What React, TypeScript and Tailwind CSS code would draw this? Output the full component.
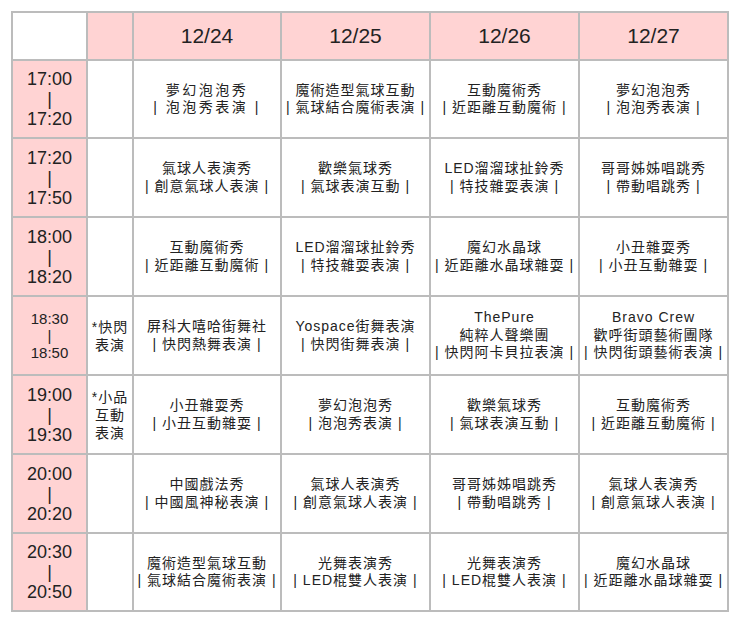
import React from "react";

type Row = {
  from: string;
  to: string;
  small?: boolean;
  note?: string[];
  cells: string[][];
};

const rows: Row[] = [
  {
    from: "17:00",
    to: "17:20",
    cells: [
      ["夢幻泡泡秀", "| 泡泡秀表演 |"],
      ["魔術造型氣球互動", "| 氣球結合魔術表演 |"],
      ["互動魔術秀", "| 近距離互動魔術 |"],
      ["夢幻泡泡秀", "| 泡泡秀表演 |"],
    ],
  },
  {
    from: "17:20",
    to: "17:50",
    cells: [
      ["氣球人表演秀", "| 創意氣球人表演 |"],
      ["歡樂氣球秀", "| 氣球表演互動 |"],
      ["LED溜溜球扯鈴秀", "| 特技雜耍表演 |"],
      ["哥哥姊姊唱跳秀", "| 帶動唱跳秀 |"],
    ],
  },
  {
    from: "18:00",
    to: "18:20",
    cells: [
      ["互動魔術秀", "| 近距離互動魔術 |"],
      ["LED溜溜球扯鈴秀", "| 特技雜耍表演 |"],
      ["魔幻水晶球", "| 近距離水晶球雜耍 |"],
      ["小丑雜耍秀", "| 小丑互動雜耍 |"],
    ],
  },
  {
    from: "18:30",
    to: "18:50",
    small: true,
    note: ["*快閃", "表演"],
    cells: [
      ["屏科大嘻哈街舞社", "| 快閃熱舞表演 |"],
      ["Yospace街舞表演", "| 快閃街舞表演 |"],
      ["ThePure", "純粹人聲樂團", "| 快閃阿卡貝拉表演 |"],
      ["Bravo Crew", "歡呼街頭藝術團隊", "| 快閃街頭藝術表演 |"],
    ],
  },
  {
    from: "19:00",
    to: "19:30",
    note: ["*小品", "互動", "表演"],
    cells: [
      ["小丑雜耍秀", "| 小丑互動雜耍 |"],
      ["夢幻泡泡秀", "| 泡泡秀表演 |"],
      ["歡樂氣球秀", "| 氣球表演互動 |"],
      ["互動魔術秀", "| 近距離互動魔術 |"],
    ],
  },
  {
    from: "20:00",
    to: "20:20",
    cells: [
      ["中國戲法秀", "| 中國風神秘表演 |"],
      ["氣球人表演秀", "| 創意氣球人表演 |"],
      ["哥哥姊姊唱跳秀", "| 帶動唱跳秀 |"],
      ["氣球人表演秀", "| 創意氣球人表演 |"],
    ],
  },
  {
    from: "20:30",
    to: "20:50",
    cells: [
      ["魔術造型氣球互動", "| 氣球結合魔術表演 |"],
      ["光舞表演秀", "| LED棍雙人表演 |"],
      ["光舞表演秀", "| LED棍雙人表演 |"],
      ["魔幻水晶球", "| 近距離水晶球雜耍 |"],
    ],
  },
];

const dates = ["12/24", "12/25", "12/26", "12/27"];

export default function App() {
  return (
    <div
      className="min-h-[622px] w-[738px] bg-white pl-[11px] pt-[11px] text-[#222]"
      style={{ fontFamily: '"Liberation Sans", "Noto Sans CJK TC", sans-serif' }}
    >
      <div className="grid w-[718px] grid-cols-[73px_44px_146px_147px_147px_147px] grid-rows-[46px_76px_77px_77px_77px_77px_77px_76px] gap-[2px] bg-[#bcbcbc] p-[2px]">
        <div className="bg-white" />
        <div className="bg-[#ffd3d3]" />
        {dates.map((d) => (
          <div
            key={d}
            className="flex items-center justify-center bg-[#ffd3d3] text-[21px] text-[#222]"
          >
            {d}
          </div>
        ))}
        {rows.map((r, ri) => (
          <React.Fragment key={r.from}>
            <div
              className={`flex flex-col items-center justify-center bg-[#ffd3d3] text-[#222] ${
                r.small ? "text-[15px] leading-[17px]" : "text-[18px] leading-[20px]"
              }`}
            >
              <span>{r.from}</span>
              <span>|</span>
              <span>{r.to}</span>
            </div>
            <div className="flex flex-col items-center justify-center bg-white text-[14px] leading-[18px] tracking-[1px]">
              {r.note?.map((n) => (
                <span key={n}>{n}</span>
              ))}
            </div>
            {r.cells.map((c, i) => (
              <div
                key={i}
                className={`flex flex-col items-center justify-center whitespace-nowrap bg-white text-[14px] leading-[17.5px] text-[#222] ${
                  ri === 0 && i === 0 ? "tracking-[2.5px]" : "tracking-[1px]"
                }`}
              >
                {c.map((l, j) => (
                  <span key={j}>{l}</span>
                ))}
              </div>
            ))}
          </React.Fragment>
        ))}
      </div>
    </div>
  );
}
